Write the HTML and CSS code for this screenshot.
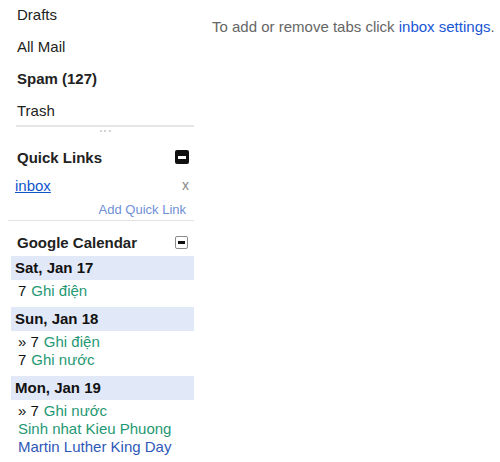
FILE: index.html
```html
<!DOCTYPE html>
<html>
<head>
<meta charset="utf-8">
<link rel="stylesheet" href="styles.css">
</head>
<body>
<div class="page">
  <div class="sidebar">
    <ul class="nav">
      <li>Drafts</li>
      <li>All Mail</li>
      <li class="bold">Spam (127)</li>
      <li>Trash</li>
    </ul>
    <div class="divider"></div>
    <div class="grip"><span></span><span></span><span></span></div>
    <div class="box-head">
      <span>Quick Links</span>
      <span class="minus minus-dark"><span class="bar"></span></span>
    </div>
    <div class="ql-row">
      <a class="ql-link" href="#">inbox</a>
      <span class="ql-x">x</span>
    </div>
    <div class="ql-add">Add Quick Link</div>
    <div class="thin-line"></div>
    <div class="box-head cal-head">
      <span>Google Calendar</span>
      <span class="minus minus-light"><span class="bar"></span></span>
    </div>
    <div class="day first">Sat, Jan 17</div>
    <div class="events">
      <div class="ev"><span class="t">7</span><span class="g">Ghi điện</span></div>
    </div>
    <div class="day">Sun, Jan 18</div>
    <div class="events">
      <div class="ev"><span class="t">» 7</span><span class="g">Ghi điện</span></div>
      <div class="ev"><span class="t">7</span><span class="g">Ghi nước</span></div>
    </div>
    <div class="day">Mon, Jan 19</div>
    <div class="events">
      <div class="ev"><span class="t">» 7</span><span class="g">Ghi nước</span></div>
      <div class="ev"><span class="g nog">Sinh nhat Kieu Phuong</span></div>
      <div class="ev"><span class="b nog">Martin Luther King Day</span></div>
    </div>
  </div>
  <div class="main">
    <p class="tabs-note">To add or remove tabs click <a href="#">inbox settings</a>.</p>
  </div>
</div>
</body>
</html>
```
FILE: styles.css
```css
html, body {
  margin: 0;
  padding: 0;
  background: #fff;
}
body {
  font-family: "Liberation Sans", Arial, sans-serif;
  font-size: 15px;
  color: #222;
}
.page {
  display: flex;
  align-items: flex-start;
}
.sidebar {
  width: 186px;
  margin-left: 8px;
  flex: none;
}
.nav {
  list-style: none;
  margin: -1px 0 0 0;
  padding: 0;
}
.nav li {
  line-height: 32px;
  height: 32px;
  padding-left: 9px;
  color: #222;
}
.nav li.bold {
  font-weight: bold;
}
.divider {
  margin-left: 8px;
  margin-top: -2px;
  border-top: 2px solid #e6e6e6;
}
.grip {
  height: 12px;
  display: flex;
  justify-content: center;
  align-items: flex-start;
  gap: 2.5px;
  padding-top: 3px;
  padding-left: 8px;
  box-sizing: border-box;
}
.grip span {
  width: 2px;
  height: 2px;
  background: #d4d4d4;
}
.box-head {
  display: flex;
  justify-content: space-between;
  align-items: center;
  height: 24px;
  margin-top: 6px;
  padding-left: 9px;
  padding-right: 6px;
  font-weight: bold;
  color: #222;
}
.minus {
  display: flex;
  align-items: center;
  justify-content: center;
  box-sizing: border-box;
}
.minus-dark {
  width: 14px;
  height: 14px;
  background: #111;
  border-radius: 2px;
  margin-right: -1px;
}
.minus-dark .bar {
  width: 8px;
  height: 3px;
  background: #fff;
}
.minus-light {
  width: 13px;
  height: 13px;
  border: 1px solid #8a8a8a;
  border-radius: 2px;
  background: #fff;
  margin-top: 1px;
}
.minus-light .bar {
  width: 7px;
  height: 3px;
  background: #111;
}
.ql-row {
  display: flex;
  justify-content: space-between;
  align-items: center;
  height: 20px;
  margin-top: 6px;
  padding-left: 7px;
  padding-right: 5px;
}
.ql-link {
  color: #1155cc;
  text-decoration: underline;
}
.ql-x {
  color: #888;
  font-size: 14px;
}
.ql-add {
  margin-top: 7px;
  line-height: 16px;
  height: 16px;
  font-size: 13px;
  color: #6f8fd6;
  text-align: right;
  padding-right: 8px;
}
.thin-line {
  margin-top: 2px;
  border-top: 1px solid #e2e2e2;
}
.cal-head {
  margin-top: 9px;
}
.day {
  margin-left: 3px;
  height: 24px;
  line-height: 24px;
  margin-top: 7px;
  padding-left: 4px;
  background: #e1e8f7;
  font-weight: bold;
  color: #111;
}
.day.first {
  margin-top: 2px;
}
.events {
  padding-top: 2px;
  padding-left: 10px;
}
.ev {
  line-height: 18px;
  height: 18px;
  white-space: nowrap;
}
.ev .t {
  color: #111;
  margin-right: 5px;
}
.ev .g {
  color: #1f9874;
}
.ev .b {
  color: #2f58b8;
}
.main {
  flex: 1;
  padding-left: 18px;
  padding-top: 18px;
}
.tabs-note {
  margin: 0;
  line-height: 18px;
  color: #666;
  white-space: nowrap;
}
.tabs-note a {
  color: #1a56d6;
  text-decoration: none;
}
```
